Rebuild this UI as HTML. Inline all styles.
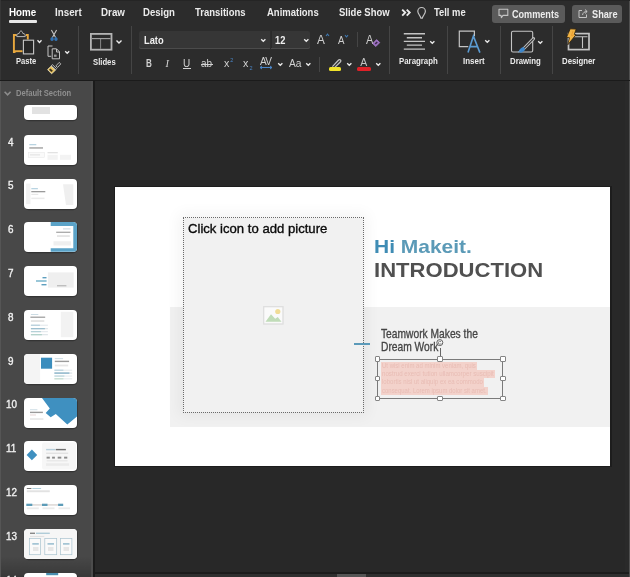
<!DOCTYPE html>
<html><head><meta charset="utf-8"><style>
html,body{margin:0;padding:0;}
body{width:630px;height:577px;overflow:hidden;position:relative;background:#2c2c2c;font-family:"Liberation Sans",sans-serif;}
.r{position:absolute;}
.t{position:absolute;line-height:1;white-space:nowrap;}
#w{position:absolute;left:0;top:0;width:630px;height:577px;will-change:transform;}
.th{background:#fff;border-radius:4px;overflow:hidden;box-shadow:0.3px 0.6px 0 0.6px rgba(0,0,0,.28);}
svg{overflow:visible}
</style></head><body><div id="w">
<div class="r" style="left:0px;top:80px;width:93px;height:497px;background:#484848;"></div>
<div class="r" style="left:0px;top:556px;width:93px;height:21px;background:linear-gradient(rgba(0,0,0,0),rgba(0,0,0,0.22));"></div>
<div class="r" style="left:90.5px;top:80px;width:2.5px;height:497px;background:#4c4c4c;"></div>
<div class="r" style="left:93px;top:80px;width:2px;height:497px;background:#1b1b1b;"></div>
<div class="r" style="left:0px;top:80px;width:1px;height:497px;background:#555555;"></div>
<div class="r" style="left:95px;top:80px;width:535px;height:492px;background:#282828;"></div>
<div class="r" style="left:95px;top:572px;width:535px;height:2px;background:#1c1c1c;"></div>
<div class="r" style="left:95px;top:574px;width:535px;height:3px;background:#2f2f2f;"></div>
<div class="r" style="left:337px;top:574px;width:29px;height:3px;background:#555555;"></div>
<div class="r" style="left:625px;top:81px;width:4px;height:491px;background:#2a2a2a;"></div>
<div class="r" style="left:629px;top:0px;width:1px;height:577px;background:#505050;"></div>
<div class="r" style="left:0px;top:79.6px;width:630px;height:1.4px;background:#1b1b1b;"></div>
<div class="r" style="left:0px;top:0px;width:630px;height:1.2px;background:#252525;"></div>
<div class="r" style="left:0px;top:0px;width:1px;height:79.6px;background:#363636;"></div>
<div class="t" style="left:9px;top:7.07px;font-size:10.780000000000001px;color:#ffffff;font-weight:bold;font-family:'Liberation Sans', sans-serif;transform:scaleX(0.9090909090909091);transform-origin:0 0;">Home</div>
<div class="r" style="left:9px;top:20.4px;width:28px;height:2.2px;background:#e8e8e8;border-radius:1px"></div>
<div class="t" style="left:54.6px;top:7.07px;font-size:10.780000000000001px;color:#ebebeb;font-weight:bold;font-family:'Liberation Sans', sans-serif;transform:scaleX(0.9090909090909091);transform-origin:0 0;">Insert</div>
<div class="t" style="left:101px;top:7.07px;font-size:10.780000000000001px;color:#ebebeb;font-weight:bold;font-family:'Liberation Sans', sans-serif;transform:scaleX(0.9090909090909091);transform-origin:0 0;">Draw</div>
<div class="t" style="left:143px;top:7.26px;font-size:10.56px;color:#ebebeb;font-weight:bold;font-family:'Liberation Sans', sans-serif;transform:scaleX(0.9090909090909091);transform-origin:0 0;">Design</div>
<div class="t" style="left:195.3px;top:7.85px;font-size:10.450000000000001px;color:#ebebeb;font-weight:bold;font-family:'Liberation Sans', sans-serif;transform:scaleX(0.9090909090909091);transform-origin:0 0;">Transitions</div>
<div class="t" style="left:267px;top:7.85px;font-size:10.450000000000001px;color:#ebebeb;font-weight:bold;font-family:'Liberation Sans', sans-serif;transform:scaleX(0.9090909090909091);transform-origin:0 0;">Animations</div>
<div class="t" style="left:338.7px;top:7.85px;font-size:10.450000000000001px;color:#ebebeb;font-weight:bold;font-family:'Liberation Sans', sans-serif;transform:scaleX(0.9090909090909091);transform-origin:0 0;">Slide Show</div>
<svg class="r" style="left:400px;top:8px" width="12" height="9" viewBox="0 0 12 9"><path d="M2.2 1.6 L5.2 4.6 L2.2 7.6 M6.7 1.6 L9.7 4.6 L6.7 7.6" stroke="#ebebeb" stroke-width="1.9" fill="none"/></svg>
<svg class="r" style="left:415px;top:5px" width="13" height="15" viewBox="0 0 13 15"><path d="M2.8 6.3 a3.8 3.8 0 1 1 7.6 0 c0 2.4 -2.4 4.2 -3.1 6.8 h-1.4 c-0.7 -2.6 -3.1 -4.4 -3.1 -6.8 z" stroke="#c4c4c4" stroke-width="1.2" fill="none"/></svg>
<div class="t" style="left:433.8px;top:7.95px;font-size:10.340000000000002px;color:#ebebeb;font-weight:bold;font-family:'Liberation Sans', sans-serif;transform:scaleX(0.9090909090909091);transform-origin:0 0;">Tell me</div>
<div class="r" style="left:492px;top:5px;width:72.5px;height:17.6px;background:#5a5a5a;border-radius:3px"></div>
<svg class="r" style="left:497px;top:8px" width="13" height="12" viewBox="0 0 13 12"><path d="M2 1.2 H10.8 V7.4 H6 L4.4 9.6 L4 7.4 H2 Z" stroke="#c4c4c4" stroke-width="1.1" fill="none" stroke-linejoin="round"/></svg>
<div class="t" style="left:512px;top:10.03px;font-size:10.01px;color:#ececec;font-weight:bold;font-family:'Liberation Sans', sans-serif;transform:scaleX(0.9090909090909091);transform-origin:0 0;">Comments</div>
<div class="r" style="left:572.4px;top:5px;width:50px;height:17.6px;background:#5a5a5a;border-radius:3px"></div>
<svg class="r" style="left:577px;top:8px" width="12" height="11" viewBox="0 0 12 11"><path d="M5 2.5 h-3 v7 h7.5 v-3 M5.5 7 c0.5 -2.5 2 -3.5 4.5 -3.5 M8 1.5 l2.2 2 -2.2 2" stroke="#c4c4c4" stroke-width="1" fill="none"/></svg>
<div class="t" style="left:592px;top:9.93px;font-size:10.12px;color:#ececec;font-weight:bold;font-family:'Liberation Sans', sans-serif;transform:scaleX(0.9090909090909091);transform-origin:0 0;">Share</div>
<div class="r" style="left:78.4px;top:26px;width:1px;height:48px;background:#454545;"></div>
<div class="r" style="left:130.6px;top:26px;width:1px;height:48px;background:#454545;"></div>
<div class="r" style="left:389.3px;top:26px;width:1px;height:48px;background:#454545;"></div>
<div class="r" style="left:447.4px;top:26px;width:1px;height:48px;background:#454545;"></div>
<div class="r" style="left:499.9px;top:26px;width:1px;height:48px;background:#454545;"></div>
<div class="r" style="left:552.4px;top:26px;width:1px;height:48px;background:#454545;"></div>
<div class="r" style="left:318.8px;top:57px;width:1px;height:14.5px;background:#454545;"></div>
<div class="r" style="left:356.5px;top:32px;width:1px;height:15px;background:#454545;"></div>
<svg class="r" style="left:11px;top:29px" width="32" height="27" viewBox="0 0 32 27">
<path d="M4.5 23 H2.9 V6 H5.8 M15 6 H16.8 V10.5" stroke="#e8a83e" stroke-width="1.9" fill="none" transform="translate(0,0)"/>
<path d="M2.9 22.2 H11.5" stroke="#e8a83e" stroke-width="1.9" fill="none"/>
<path d="M5.8 7.6 V5.6 C6.5 4.8 7.4 4.6 8.2 4.4 C8.6 2.6 9.3 2 10 2 C10.7 2 11.4 2.6 11.8 4.4 C12.6 4.6 13.5 4.8 14.2 5.6 V7.6 Z" stroke="#b8b8b8" stroke-width="1" fill="#2c2c2c"/>
<rect x="12.4" y="11.2" width="10.2" height="13.7" fill="#262626" stroke="#c8c8c8" stroke-width="1.1"/>
</svg>
<svg class="r" style="left:36px;top:39px" width="7" height="5" viewBox="0 0 7 5"><path d="M1.5 1.2 L3.5 3.5 L5.5 1.2" stroke="#ebebeb" stroke-width="1.3" fill="none"/></svg>
<div class="t" style="left:15.9px;top:57.32px;font-size:8.36px;color:#ebebeb;font-weight:bold;font-family:'Liberation Sans', sans-serif;transform:scaleX(0.9090909090909091);transform-origin:0 0;">Paste</div>
<svg class="r" style="left:48px;top:29px" width="12" height="14" viewBox="0 0 12 14">
<path d="M3.4 1 L7.6 8.5 M8.6 1 L4.4 8.5" stroke="#c4c4c4" stroke-width="1.1" fill="none"/>
<path d="M4 8 C2.6 8.6 2 9.8 2.6 11.2 C3.3 12.4 5 12 5.6 11 C6 10 5.6 8.6 4.6 8.2 Z" fill="#3270b0"/>
<path d="M8 8 C9.4 8.6 10 9.8 9.4 11.2 C8.7 12.4 7 12 6.4 11 C6 10 6.4 8.6 7.4 8.2 Z" fill="#3270b0"/>
</svg>
<svg class="r" style="left:47px;top:45px" width="14" height="15" viewBox="0 0 14 15">
<path d="M1 11.3 V1 h4.5 M1 11.3 h3.2" stroke="#c4c4c4" stroke-width="1" fill="none"/>
<path d="M5.2 3.8 h4.3 l3 3 v7 h-7.3 z M9.5 4 v3 h3" stroke="#c4c4c4" stroke-width="1" fill="none"/>
<rect x="7" y="9.6" width="2.6" height="2.2" fill="#9a9a9a"/>
</svg>
<svg class="r" style="left:64px;top:50px" width="7" height="5" viewBox="0 0 7 5"><path d="M1.2 1.2 L3.2 3.3 L5.2 1.2" stroke="#ebebeb" stroke-width="1.3" fill="none"/></svg>
<svg class="r" style="left:47px;top:61px" width="15" height="14" viewBox="0 0 15 14">
<path d="M12.2 1.4 L13.8 2.9 L10.6 6.4 L8.9 4.9 Z" stroke="#c4c4c4" stroke-width="0.9" fill="#2c2c2c"/>
<path d="M5.4 3.6 L9.6 7.6 L8.6 8.8 L4.3 4.9 Z" stroke="#c4c4c4" stroke-width="0.9" fill="#2c2c2c"/>
<path d="M4.1 5.2 L8.4 9.2 L4.6 12.8 L0.6 8.6 Z" fill="#e9c25a" stroke="#efe3bf" stroke-width="0.8"/>
<path d="M3.4 7.4 L5.9 9.8 L4.4 11.1 L2 8.7 Z" fill="#3b3320"/>
</svg>
<svg class="r" style="left:89px;top:32px" width="24" height="19" viewBox="0 0 24 19">
<rect x="1.9" y="1.9" width="20.6" height="15.8" fill="none" stroke="#b4b4b4" stroke-width="1.8"/>
<path d="M3 6.6 H21.5" stroke="#a8a8a8" stroke-width="1.1"/>
<path d="M11.6 7 V16.8" stroke="#a0a0a0" stroke-width="0.8"/>
</svg>
<svg class="r" style="left:115px;top:39px" width="8" height="6" viewBox="0 0 8 6"><path d="M1.5 1.5 L4 4 L6.5 1.5" stroke="#ebebeb" stroke-width="1.4" fill="none"/></svg>
<div class="t" style="left:93.3px;top:57.63px;font-size:8.47px;color:#ebebeb;font-weight:bold;font-family:'Liberation Sans', sans-serif;transform:scaleX(0.9090909090909091);transform-origin:0 0;">Slides</div>
<div class="r" style="left:139px;top:30.6px;width:130.6px;height:18.2px;background:#363636;border-radius:2px 0 0 2px;box-shadow:inset 0 -1px 0 #4b4b4b"></div>
<div class="t" style="left:143.5px;top:36.04px;font-size:10.230000000000002px;color:#f0f0f0;font-weight:bold;font-family:'Liberation Sans', sans-serif;transform:scaleX(0.9090909090909091);transform-origin:0 0;">Lato</div>
<svg class="r" style="left:260px;top:38px" width="7" height="5" viewBox="0 0 7 5"><path d="M1.2 1.2 L3.3 3.3 L5.4 1.2" stroke="#ebebeb" stroke-width="1.3" fill="none"/></svg>
<div class="r" style="left:270.6px;top:30.6px;width:39.4px;height:18.2px;background:#363636;border-radius:0 2px 2px 0;box-shadow:inset 0 -1px 0 #4b4b4b,inset 1px 0 0 #2a2a2a"></div>
<div class="t" style="left:275.2px;top:36.04px;font-size:10.230000000000002px;color:#f0f0f0;font-weight:bold;font-family:'Liberation Sans', sans-serif;transform:scaleX(0.9090909090909091);transform-origin:0 0;">12</div>
<svg class="r" style="left:303px;top:38px" width="7" height="5" viewBox="0 0 7 5"><path d="M1.2 1.2 L3.3 3.3 L5.4 1.2" stroke="#ebebeb" stroke-width="1.3" fill="none"/></svg>
<div class="t" style="left:316.8px;top:32.86px;font-size:13.4px;color:#cfcfcf;font-weight:normal;font-family:'Liberation Sans', sans-serif;transform:scaleX(0.88);transform-origin:0 0;">A</div>
<svg class="r" style="left:325px;top:32.5px" width="5" height="4" viewBox="0 0 5 4"><path d="M1 3 L2.5 1.2 L4 3" stroke="#3f78b0" stroke-width="1.1" fill="none"/></svg>
<div class="t" style="left:337.6px;top:34.89px;font-size:11.0px;color:#cfcfcf;font-weight:normal;font-family:'Liberation Sans', sans-serif;transform:scaleX(0.88);transform-origin:0 0;">A</div>
<svg class="r" style="left:344px;top:34px" width="5" height="4" viewBox="0 0 5 4"><path d="M1 1.2 L2.5 3 L4 1.2" stroke="#3f78b0" stroke-width="1.1" fill="none"/></svg>
<div class="t" style="left:366.2px;top:33.62px;font-size:12.5px;color:#cfcfcf;font-weight:normal;font-family:'Liberation Sans', sans-serif;transform:scaleX(0.88);transform-origin:0 0;">A</div>
<svg class="r" style="left:370.5px;top:38px" width="10" height="10" viewBox="0 0 10 10"><path d="M1.6 5.6 L5.6 1.6 L8.8 4.6 L4.8 8.6 Z" fill="#9c6fc2" stroke="#b48ad6" stroke-width="0.6"/><path d="M3.6 5.4 L5.6 3.4 L6.8 4.6 L4.8 6.6 Z" fill="#3c2c4a"/></svg>
<div class="t" style="left:145.6px;top:58.50px;font-size:10.4px;color:#d2d2d2;font-weight:bold;font-family:'Liberation Sans', sans-serif;transform:scaleX(0.78);transform-origin:0 0;">B</div>
<div class="t" style="left:165.6px;top:58.50px;font-size:10.4px;color:#d2d2d2;font-weight:normal;font-family:'Liberation Serif', serif;font-style:italic">I</div>
<div class="t" style="left:183.2px;top:58.67px;font-size:10.2px;color:#d2d2d2;font-weight:normal;font-family:'Liberation Sans', sans-serif;transform:scaleX(0.98);transform-origin:0 0;">U</div>
<div class="r" style="left:183.2px;top:68.4px;width:7.4px;height:0.9px;background:#d2d2d2;"></div>
<div class="t" style="left:201px;top:58.41px;font-size:10.5px;color:#d2d2d2;font-weight:normal;font-family:'Liberation Sans', sans-serif;transform:scaleX(0.95);transform-origin:0 0;">ab</div>
<div class="r" style="left:200.5px;top:63.6px;width:12.5px;height:0.9px;background:#d2d2d2;"></div>
<div class="t" style="left:224px;top:58.97px;font-size:10.2px;color:#d2d2d2;font-weight:normal;font-family:'Liberation Sans', sans-serif;transform:scaleX(1.05);transform-origin:0 0;">x</div>
<div class="t" style="left:230.2px;top:57.54px;font-size:5.5px;color:#4a86c8;font-weight:normal;font-family:'Liberation Sans', sans-serif;">2</div>
<div class="t" style="left:243px;top:58.97px;font-size:10.2px;color:#d2d2d2;font-weight:normal;font-family:'Liberation Sans', sans-serif;transform:scaleX(1.05);transform-origin:0 0;">x</div>
<div class="t" style="left:249.4px;top:66.14px;font-size:5.5px;color:#4a86c8;font-weight:normal;font-family:'Liberation Sans', sans-serif;">2</div>
<div class="t" style="left:259.8px;top:57.18px;font-size:10.3px;color:#d2d2d2;font-weight:normal;font-family:'Liberation Sans', sans-serif;transform:scaleX(0.98);transform-origin:0 0;letter-spacing:-0.7px;">AV</div>
<svg class="r" style="left:259px;top:65px" width="14" height="5" viewBox="0 0 14 5"><path d="M1 2.5 H13 M1 2.5 L3 1 M1 2.5 L3 4 M13 2.5 L11 1 M13 2.5 L11 4" stroke="#4a86c8" stroke-width="1" fill="none"/></svg>
<svg class="r" style="left:276.5px;top:61.5px" width="7" height="5" viewBox="0 0 7 5"><path d="M1.2 1.2 L3.3 3.3 L5.4 1.2" stroke="#ebebeb" stroke-width="1.3" fill="none"/></svg>
<div class="t" style="left:289px;top:59.10px;font-size:10.4px;color:#d2d2d2;font-weight:normal;font-family:'Liberation Sans', sans-serif;transform:scaleX(0.98);transform-origin:0 0;">Aa</div>
<svg class="r" style="left:305px;top:62px" width="7" height="5" viewBox="0 0 7 5"><path d="M1.2 1.2 L3.3 3.3 L5.4 1.2" stroke="#ebebeb" stroke-width="1.3" fill="none"/></svg>
<svg class="r" style="left:328px;top:57px" width="14" height="14" viewBox="0 0 14 14"><path d="M4.4 9.6 L10.6 3 a1.3 1.3 0 0 1 1.9 1.8 L6.6 10.6" fill="none" stroke="#c4c4c4" stroke-width="1.2"/></svg>
<div class="r" style="left:329.2px;top:67.2px;width:11.9px;height:3.5px;background:#f0e22a;border-radius:1.5px"></div>
<svg class="r" style="left:345.5px;top:62px" width="7" height="5" viewBox="0 0 7 5"><path d="M1.2 1.2 L3.3 3.3 L5.4 1.2" stroke="#ebebeb" stroke-width="1.3" fill="none"/></svg>
<div class="t" style="left:360.2px;top:57.01px;font-size:10.5px;color:#c4c4c4;font-weight:normal;font-family:'Liberation Sans', sans-serif;">A</div>
<div class="r" style="left:357.3px;top:67.2px;width:13.4px;height:3.7px;background:#df2128;border-radius:1.5px"></div>
<svg class="r" style="left:374.5px;top:62px" width="7" height="5" viewBox="0 0 7 5"><path d="M1.2 1.2 L3.3 3.3 L5.4 1.2" stroke="#ebebeb" stroke-width="1.3" fill="none"/></svg>
<svg class="r" style="left:402px;top:32px" width="25" height="18" viewBox="0 0 25 18">
<path d="M1.8 1.8 H23 M4.8 5.7 H20 M1.8 9.4 H23 M4.8 13.1 H20 M1.8 17.1 H23" stroke="#c4c4c4" stroke-width="1.4"/>
</svg>
<svg class="r" style="left:428.9px;top:39.5px" width="7" height="5" viewBox="0 0 7 5"><path d="M1.2 1.2 L3.3 3.3 L5.4 1.2" stroke="#ebebeb" stroke-width="1.3" fill="none"/></svg>
<div class="t" style="left:399.3px;top:57.09px;font-size:8.635px;color:#ebebeb;font-weight:bold;font-family:'Liberation Sans', sans-serif;transform:scaleX(0.9090909090909091);transform-origin:0 0;">Paragraph</div>
<svg class="r" style="left:458px;top:30px" width="24" height="24" viewBox="0 0 24 24">
<path d="M10.3 16.6 H1.3 V1.1 H16.4 V6.2" stroke="#c4c4c4" stroke-width="1.2" fill="none"/>
<path d="M10 22.6 L15.4 6.2 L21.9 22.6 M12.3 16.6 H19.6" stroke="#5b9bd2" stroke-width="1.6" fill="none"/>
</svg>
<svg class="r" style="left:483.6px;top:39.2px" width="7" height="5" viewBox="0 0 7 5"><path d="M1.2 1.2 L3.3 3.3 L5.4 1.2" stroke="#ebebeb" stroke-width="1.3" fill="none"/></svg>
<div class="t" style="left:462.7px;top:56.50px;font-size:8.745000000000001px;color:#ebebeb;font-weight:bold;font-family:'Liberation Sans', sans-serif;transform:scaleX(0.9090909090909091);transform-origin:0 0;">Insert</div>
<svg class="r" style="left:505px;top:26px" width="40" height="30" viewBox="0 0 40 30">
<rect x="6.5" y="5.3" width="21.2" height="20.7" rx="1.5" fill="none" stroke="#c4c4c4" stroke-width="1.1"/>
<path d="M28.6 12.6 L18.6 22.8" stroke="#c4c4c4" stroke-width="3" stroke-linecap="round" fill="none"/>
<path d="M28.6 12.6 L18.6 22.8" stroke="#2c2c2c" stroke-width="1.1" fill="none"/>
<ellipse cx="17" cy="24" rx="3.2" ry="2.1" transform="rotate(-40 17 24)" fill="#3b86cc"/>
<path d="M13.2 26.2 C14 25.6 14.5 25.2 15 24.6" stroke="#7fb8e6" stroke-width="0.9" fill="none"/>
</svg>
<svg class="r" style="left:537px;top:40px" width="7" height="5" viewBox="0 0 7 5"><path d="M1.2 1.2 L3.3 3.3 L5.4 1.2" stroke="#ebebeb" stroke-width="1.3" fill="none"/></svg>
<div class="t" style="left:510.4px;top:57.14px;font-size:8.58px;color:#ebebeb;font-weight:bold;font-family:'Liberation Sans', sans-serif;transform:scaleX(0.9090909090909091);transform-origin:0 0;">Drawing</div>
<svg class="r" style="left:560px;top:26px" width="40" height="30" viewBox="0 0 40 30">
<rect x="8.5" y="7.6" width="20.5" height="16" fill="none" stroke="#c4c4c4" stroke-width="1.7"/>
<path d="M10 10.8 H27.5 M22.5 11 V22" stroke="#c4c4c4" stroke-width="1.1"/>
<path d="M10.2 2.8 L16.2 3.1 L14.3 8.4 L16 8.7 L7.8 18.8 L9.4 11.7 L6.5 11.4 Z" fill="#f2b445" stroke="#2a2010" stroke-width="0.8" stroke-linejoin="round"/><path d="M13 5 L11.5 9.5 L13.5 9.8" stroke="#e8962a" stroke-width="0.8" fill="none"/>
</svg>
<div class="t" style="left:561.9px;top:57.14px;font-size:8.58px;color:#ebebeb;font-weight:bold;font-family:'Liberation Sans', sans-serif;transform:scaleX(0.9090909090909091);transform-origin:0 0;">Designer</div>
<svg class="r" style="left:3px;top:89.5px" width="9" height="7" viewBox="0 0 9 7"><path d="M1.6 1.8 L4.6 4.8 L7.6 1.8" stroke="#8c8c8c" stroke-width="1.6" fill="none"/></svg>
<div class="t" style="left:15.9px;top:88.72px;font-size:8.36px;color:#8f8f8f;font-weight:bold;font-family:'Liberation Sans', sans-serif;transform:scaleX(0.9090909090909091);transform-origin:0 0;">Default Section</div>
<div class="r th" style="left:23.8px;top:104.6px;width:53.5px;height:15.8px"><div class="r" style="left:8px;top:2.5px;width:18px;height:7px;background:#e2e2e2"></div></div>
<div class="t" style="left:7.6px;top:137.67px;font-size:10.2px;color:#f0f0f0;font-weight:normal;font-family:'Liberation Sans', sans-serif;transform:scaleX(0.97);transform-origin:0 0;-webkit-text-stroke:0.35px #f0f0f0">4</div>
<div class="t" style="left:7.6px;top:181.47px;font-size:10.2px;color:#f0f0f0;font-weight:normal;font-family:'Liberation Sans', sans-serif;transform:scaleX(0.97);transform-origin:0 0;-webkit-text-stroke:0.35px #f0f0f0">5</div>
<div class="t" style="left:7.6px;top:225.27px;font-size:10.2px;color:#f0f0f0;font-weight:normal;font-family:'Liberation Sans', sans-serif;transform:scaleX(0.97);transform-origin:0 0;-webkit-text-stroke:0.35px #f0f0f0">6</div>
<div class="t" style="left:7.6px;top:269.07px;font-size:10.2px;color:#f0f0f0;font-weight:normal;font-family:'Liberation Sans', sans-serif;transform:scaleX(0.97);transform-origin:0 0;-webkit-text-stroke:0.35px #f0f0f0">7</div>
<div class="t" style="left:7.6px;top:312.87px;font-size:10.2px;color:#f0f0f0;font-weight:normal;font-family:'Liberation Sans', sans-serif;transform:scaleX(0.97);transform-origin:0 0;-webkit-text-stroke:0.35px #f0f0f0">8</div>
<div class="t" style="left:7.6px;top:356.67px;font-size:10.2px;color:#f0f0f0;font-weight:normal;font-family:'Liberation Sans', sans-serif;transform:scaleX(0.97);transform-origin:0 0;-webkit-text-stroke:0.35px #f0f0f0">9</div>
<div class="t" style="left:5.6px;top:400.47px;font-size:10.2px;color:#f0f0f0;font-weight:normal;font-family:'Liberation Sans', sans-serif;transform:scaleX(0.97);transform-origin:0 0;-webkit-text-stroke:0.35px #f0f0f0">10</div>
<div class="t" style="left:5.6px;top:444.27px;font-size:10.2px;color:#f0f0f0;font-weight:normal;font-family:'Liberation Sans', sans-serif;transform:scaleX(0.97);transform-origin:0 0;-webkit-text-stroke:0.35px #f0f0f0">11</div>
<div class="t" style="left:5.6px;top:488.07px;font-size:10.2px;color:#f0f0f0;font-weight:normal;font-family:'Liberation Sans', sans-serif;transform:scaleX(0.97);transform-origin:0 0;-webkit-text-stroke:0.35px #f0f0f0">12</div>
<div class="t" style="left:5.6px;top:531.87px;font-size:10.2px;color:#f0f0f0;font-weight:normal;font-family:'Liberation Sans', sans-serif;transform:scaleX(0.97);transform-origin:0 0;-webkit-text-stroke:0.35px #f0f0f0">13</div>
<div class="t" style="left:5.6px;top:575.67px;font-size:10.2px;color:#f0f0f0;font-weight:normal;font-family:'Liberation Sans', sans-serif;transform:scaleX(0.97);transform-origin:0 0;-webkit-text-stroke:0.35px #f0f0f0">14</div>
<div class="r th" style="left:23.8px;top:134.7px;width:53.2px;height:30.2px"><svg width="53.2" height="29.8" viewBox="0 0 53.2 29.8" style="position:absolute;left:0;top:0"><rect x="5.3" y="9.3" width="7" height="0.9" fill="#9cc2d6"/><rect x="5.3" y="12.3" width="13.7" height="1.3" fill="#9a9a9a"/><rect x="4.3" y="17.4" width="16.2" height="5.2" fill="#fafafa" stroke="#e6e6e6" stroke-width="0.5"/><rect x="6" y="19.5" width="10" height="0.8" fill="#dadada"/><rect x="23.5" y="17.4" width="10.3" height="0.8" fill="#cfcfcf"/><rect x="23.5" y="19.8" width="10.3" height="5" fill="#ebebeb" opacity=".6"/><rect x="36" y="19.8" width="11" height="5" fill="#ebebeb" opacity=".6"/></svg></div>
<div class="r th" style="left:23.8px;top:178.5px;width:53.2px;height:30.2px"><svg width="53.2" height="29.8" viewBox="0 0 53.2 29.8" style="position:absolute;left:0;top:0"><rect x="2.1" y="4.6" width="4.4" height="20.6" fill="#f1f1f1"/><rect x="7.3" y="9.3" width="6.6" height="0.9" fill="#9cc2d6"/><rect x="7.3" y="12" width="14" height="1.3" fill="#9a9a9a"/><rect x="7.3" y="14.9" width="7" height="0.7" fill="#d8d8d8"/><rect x="7.3" y="18.6" width="13.2" height="1.5" fill="#ebebeb"/><path d="M39 5.3 H49.3 V26 H42 Z" fill="#efefef"/></svg></div>
<div class="r th" style="left:23.8px;top:222.3px;width:53.2px;height:30.2px"><svg width="53.2" height="29.8" viewBox="0 0 53.2 29.8" style="position:absolute;left:0;top:0"><path d="M26.7 0 H53.2 V29.8 H26.7 V26.2 H49.3 V4.1 H26.7 Z" fill="#5ba3c8"/><rect x="39" y="6.4" width="7.5" height="1" fill="#c8d8e0"/><rect x="32.2" y="9.7" width="14.3" height="1.1" fill="#9a9a9a"/><rect x="33" y="13.4" width="12.8" height="1.3" fill="#dadada"/><rect x="29.5" y="19.3" width="17.5" height="4.2" fill="#ebebeb" opacity=".8"/></svg></div>
<div class="r th" style="left:23.8px;top:266.1px;width:53.2px;height:30.2px"><svg width="53.2" height="29.8" viewBox="0 0 53.2 29.8" style="position:absolute;left:0;top:0"><rect x="23.9" y="6.4" width="25.8" height="15.2" fill="#efefef"/><rect x="18.5" y="11" width="4" height="1.4" fill="#5e9fbf"/><rect x="12" y="14.3" width="10.6" height="1.4" fill="#6fb0c8"/><rect x="17.5" y="18" width="5" height="1.4" fill="#5e9fbf"/><rect x="33" y="19.3" width="9.4" height="1" fill="#aaaaaa"/></svg></div>
<div class="r th" style="left:23.8px;top:309.9px;width:53.2px;height:30.2px"><svg width="53.2" height="29.8" viewBox="0 0 53.2 29.8" style="position:absolute;left:0;top:0"><rect x="36.8" y="1.8" width="12.5" height="25.4" fill="#f2f2f2"/><rect x="6.9" y="4.1" width="7.4" height="0.8" fill="#c0d4de"/><rect x="6.4" y="6.6" width="14.8" height="1.2" fill="#9a9a9a"/><rect x="6.9" y="10.1" width="13.4" height="1.9" fill="#e4e4e4"/><rect x="6.9" y="14.7" width="17" height="1" fill="#e0e6ea"/><rect x="6.9" y="14.7" width="9" height="1" fill="#a9c8d6"/><rect x="6.9" y="18" width="17" height="1.3" fill="#e0e6ea"/><rect x="6.9" y="18" width="14" height="1.3" fill="#9dbfcf"/><rect x="6.9" y="21.2" width="17" height="1" fill="#e0e6ea"/><rect x="6.9" y="21.2" width="10" height="1" fill="#a9ccd2"/><rect x="6.9" y="24" width="17" height="1.3" fill="#e0e6ea"/><rect x="6.9" y="24" width="11" height="1.3" fill="#b5d4cc"/></svg></div>
<div class="r th" style="left:23.8px;top:353.7px;width:53.2px;height:30.2px"><svg width="53.2" height="29.8" viewBox="0 0 53.2 29.8" style="position:absolute;left:0;top:0"><rect x="0" y="0" width="16.1" height="29.8" fill="#f4f4f4"/><rect x="17" y="3.7" width="11.1" height="11" fill="#3a8dbd"/><rect x="30.8" y="4.3" width="8.3" height="0.8" fill="#c0d4de"/><rect x="30.8" y="6.7" width="14.3" height="1.4" fill="#9a9a9a"/><rect x="30.8" y="10.6" width="13.4" height="1.8" fill="#e6e6e6"/><rect x="30.4" y="15.7" width="17.8" height="0.9" fill="#e0e6ea"/><rect x="30.4" y="15.7" width="9" height="0.9" fill="#a9c8d6"/><rect x="30.4" y="18.4" width="17.8" height="1.4" fill="#e0e6ea"/><rect x="30.4" y="18.4" width="15" height="1.4" fill="#8cb6cb"/><rect x="30.4" y="21.6" width="17.8" height="0.9" fill="#e0e6ea"/><rect x="30.4" y="21.6" width="10" height="0.9" fill="#a9ccd2"/><rect x="30.4" y="24.4" width="17.8" height="0.9" fill="#e0e6ea"/><rect x="30.4" y="24.4" width="9" height="0.9" fill="#b5d8c4"/></svg></div>
<div class="r th" style="left:23.8px;top:397.5px;width:53.2px;height:30.2px"><svg width="53.2" height="29.8" viewBox="0 0 53.2 29.8" style="position:absolute;left:0;top:0"><path d="M18 0 H53.2 V18.3 L43.3 26.6 L31.8 16 L26.7 19.2 L21.7 15.1 L25.8 10.5 L18 0 Z" fill="#3f90c0"/><rect x="6" y="11.4" width="7.4" height="0.8" fill="#c0d4de"/><rect x="6" y="13.7" width="12.9" height="1.4" fill="#9a9a9a"/><rect x="6" y="16.6" width="6" height="0.8" fill="#e2cccc"/><rect x="6" y="20.1" width="13.4" height="1.9" fill="#ebebeb"/></svg></div>
<div class="r th" style="left:23.8px;top:441.3px;width:53.2px;height:30.2px"><svg width="53.2" height="29.8" viewBox="0 0 53.2 29.8" style="position:absolute;left:0;top:0"><rect x="18" y="1.5" width="34" height="27" rx="2" fill="#f7f7f7"/><path d="M7.9 8.6 L13.2 13.9 L7.9 19.2 L2.6 13.9 Z" fill="#3f90c0"/><rect x="22.1" y="7.9" width="9.2" height="1.4" fill="#b8d0dc"/><rect x="31.8" y="7.9" width="10.1" height="1.4" fill="#707070"/><rect x="22.1" y="11.6" width="22.1" height="1.4" fill="#e2e2e2"/><rect x="22.6" y="15.7" width="3.2" height="1.9" fill="#8c8c8c"/><rect x="28.1" y="15.7" width="2.8" height="1.9" fill="#8c8c8c"/><rect x="33.7" y="15.7" width="3.6" height="1.9" fill="#8c8c8c"/><rect x="40.1" y="15.7" width="3.2" height="1.9" fill="#8c8c8c"/><rect x="22.6" y="19.4" width="21" height="0.9" fill="#e0e0e0"/><rect x="22.1" y="22.2" width="23" height="2.7" fill="#ebebeb"/></svg></div>
<div class="r th" style="left:23.8px;top:485.1px;width:53.2px;height:30.2px"><svg width="53.2" height="29.8" viewBox="0 0 53.2 29.8" style="position:absolute;left:0;top:0"><rect x="2.8" y="3" width="4.6" height="1" fill="#777"/><rect x="8.3" y="3" width="8.8" height="1" fill="#b0d0dc"/><rect x="2.8" y="5.3" width="23" height="1.9" fill="#e2e2e2"/><rect x="8" y="19.4" width="26" height="1.1" fill="#cfc9c6"/><rect x="2.3" y="18.7" width="6" height="2.3" fill="#5d9cb8"/><rect x="18" y="18.7" width="5.5" height="2.3" fill="#5d9cb8"/><rect x="34.1" y="18.7" width="5.1" height="2.3" fill="#5d9cb8"/><rect x="2.8" y="22.4" width="12" height="1.8" fill="#ebebeb"/><rect x="18.5" y="22.4" width="12" height="1.8" fill="#ebebeb"/><rect x="34.5" y="22.4" width="11.5" height="1.8" fill="#ebebeb"/></svg></div>
<div class="r th" style="left:23.8px;top:528.9px;width:53.2px;height:30.2px"><svg width="53.2" height="29.8" viewBox="0 0 53.2 29.8" style="position:absolute;left:0;top:0"><rect x="0" y="0" width="53.2" height="29.8" fill="#f6f6f6"/><rect x="6" y="3.6" width="5" height="1.4" fill="#888"/><rect x="12" y="3.6" width="13.8" height="1.4" fill="#b0ccd8"/><rect x="6" y="6.9" width="14.3" height="0.9" fill="#dcdcdc"/><rect x="5.6" y="9.6" width="11" height="16.1" fill="#fafafa" stroke="#a9c3cf" stroke-width="0.7"/><rect x="20.8" y="9.6" width="11.9" height="16.1" fill="#fafafa" stroke="#a9c3cf" stroke-width="0.7"/><rect x="36.4" y="9.6" width="11.5" height="16.1" fill="#fafafa" stroke="#a9c3cf" stroke-width="0.7"/><rect x="8.3" y="14.2" width="6.5" height="1.4" fill="#8fb8cc"/><rect x="23.5" y="14.2" width="6.5" height="1.4" fill="#8fb8cc"/><rect x="39" y="14.2" width="6.5" height="1.4" fill="#8fb8cc"/><rect x="9" y="18" width="5.5" height="4" fill="#e6e6e6"/><rect x="24" y="18" width="5.5" height="4" fill="#e6e6e6"/><rect x="39.5" y="18" width="5.5" height="4" fill="#e6e6e6"/></svg></div>
<div class="r th" style="left:23.8px;top:572.7px;width:53.2px;height:30.2px"><svg width="53.2" height="29.8" viewBox="0 0 53.2 29.8" style="position:absolute;left:0;top:0"><rect x="22.2" y="0" width="12" height="2.2" fill="#4a8fb0"/></svg></div>
<div class="r" style="left:114px;top:185.7px;width:497.5px;height:281.7px;background:#151515;opacity:.6"></div>
<div class="r" style="left:114.9px;top:186.7px;width:495.6px;height:279.7px;background:#ffffff;"></div>
<div class="r" style="left:170.3px;top:306.9px;width:440.2px;height:119.8px;background:#f1f1f1;"></div>
<div class="r" style="left:183px;top:217.5px;width:180.3px;height:194.5px;background:#f1f1f1;box-shadow:0 0 14px 4px rgba(0,0,0,0.05);"></div>
<div class="r" style="left:182.7px;top:217.2px;width:179.6px;height:194.2px;border:1px dotted #6a6a6a;box-sizing:content-box"></div>
<div class="t" style="left:187.6px;top:222.33px;font-size:13.2px;color:#0a0a0a;font-weight:normal;font-family:'Liberation Sans', sans-serif;transform:scaleX(0.995);transform-origin:0 0;-webkit-text-stroke:0.35px #0a0a0a">Click icon to add picture</div>
<svg class="r" style="left:263px;top:306px" width="21" height="19" viewBox="0 0 21 19">
<rect x="0.7" y="0.7" width="19.3" height="17.3" fill="#fafafa" stroke="#dedede" stroke-width="1.3"/>
<path d="M2.5 15.8 L8 8.2 L12.2 12.8 L14.8 11 L18.5 15.8 Z" fill="#c0dcb8"/>
<circle cx="14.8" cy="5.5" r="2.6" fill="#f0dc96"/>
</svg>
<div class="t" style="left:373.9px;top:237.66px;font-size:18.6px;color:#3b8cb5;font-weight:bold;font-family:'Liberation Sans', sans-serif;transform:scaleX(1.128);transform-origin:0 0;"><span style="color:#3f8cb4">Hi</span> <span style="color:#5b9ab7">Makeit.</span></div>
<div class="t" style="left:373.9px;top:260.11px;font-size:20.9px;color:#505050;font-weight:bold;font-family:'Liberation Sans', sans-serif;transform:scaleX(1.056);transform-origin:0 0;">INTRODUCTION</div>
<div class="t" style="left:381.4px;top:329.43px;font-size:11.9px;color:#444444;font-weight:normal;font-family:'Liberation Sans', sans-serif;transform:scaleX(0.862);transform-origin:0 0;-webkit-text-stroke:0.3px #444">Teamwork Makes the</div>
<div class="t" style="left:381.4px;top:342.03px;font-size:11.9px;color:#444444;font-weight:normal;font-family:'Liberation Sans', sans-serif;transform:scaleX(0.862);transform-origin:0 0;-webkit-text-stroke:0.3px #444">Dream Work</div>
<div class="r" style="left:354.4px;top:343.2px;width:15.6px;height:1.8px;background:#5b9ab9;"></div>
<div class="r" style="left:381.2px;top:362px;width:95.69999999999999px;height:8.199999999999989px;background:#f3d2cb;"></div>
<div class="r" style="left:381.2px;top:370.2px;width:113.60000000000002px;height:8.199999999999989px;background:#f3d2cb;"></div>
<div class="r" style="left:381.2px;top:378.4px;width:102.80000000000001px;height:8.200000000000045px;background:#f3d2cb;"></div>
<div class="r" style="left:381.2px;top:386.6px;width:106.40000000000003px;height:8.199999999999989px;background:#f3d2cb;"></div>
<div class="t" style="left:382px;top:362.97px;font-size:6.3px;color:#e8bcb4;font-weight:normal;font-family:'Liberation Sans', sans-serif;transform:scaleX(0.9545156519219917);transform-origin:0 0;">Ut wisi enim ad minim veniam, quis</div>
<div class="t" style="left:382px;top:371.17px;font-size:6.3px;color:#e8bcb4;font-weight:normal;font-family:'Liberation Sans', sans-serif;transform:scaleX(0.979471374020984);transform-origin:0 0;">nostrud exerci tution ullamcorper suscipit</div>
<div class="t" style="left:382px;top:379.37px;font-size:6.3px;color:#e8bcb4;font-weight:normal;font-family:'Liberation Sans', sans-serif;transform:scaleX(0.961469096220537);transform-origin:0 0;">lobortis nisl ut aliquip ex ea commodo</div>
<div class="t" style="left:382px;top:387.57px;font-size:6.3px;color:#e8bcb4;font-weight:normal;font-family:'Liberation Sans', sans-serif;transform:scaleX(0.9483717922291711);transform-origin:0 0;">consequat. Lorem ipsum dolor sit amet.</div>
<div class="r" style="left:377.4px;top:358.8px;width:125.7px;height:39.8px;border:1px solid #7a7a7a;box-sizing:border-box"></div>
<div class="r" style="left:440px;top:347.5px;width:1px;height:11px;background:#666666;"></div>
<svg class="r" style="left:435.3px;top:338.2px" width="10" height="10" viewBox="0 0 10 10"><circle cx="4.8" cy="4.6" r="3.0" fill="#f8f8f8" stroke="#505050" stroke-width="0.9"/><path d="M6 3.9 A1.5 1.5 0 1 0 6.2 5.2" stroke="#555" stroke-width="0.7" fill="none"/></svg>
<div class="r" style="left:374.6px;top:356.0px;width:5.6px;height:5.6px;background:#fff;border:1px solid #858585;box-sizing:border-box;border-radius:1px"></div>
<div class="r" style="left:374.6px;top:375.9px;width:5.6px;height:5.6px;background:#fff;border:1px solid #858585;box-sizing:border-box;border-radius:1px"></div>
<div class="r" style="left:374.6px;top:395.8px;width:5.6px;height:5.6px;background:#fff;border:1px solid #858585;box-sizing:border-box;border-radius:1px"></div>
<div class="r" style="left:437.4px;top:356.0px;width:5.6px;height:5.6px;background:#fff;border:1px solid #858585;box-sizing:border-box;border-radius:1px"></div>
<div class="r" style="left:437.4px;top:395.8px;width:5.6px;height:5.6px;background:#fff;border:1px solid #858585;box-sizing:border-box;border-radius:1px"></div>
<div class="r" style="left:500.3px;top:356.0px;width:5.6px;height:5.6px;background:#fff;border:1px solid #858585;box-sizing:border-box;border-radius:1px"></div>
<div class="r" style="left:500.3px;top:375.9px;width:5.6px;height:5.6px;background:#fff;border:1px solid #858585;box-sizing:border-box;border-radius:1px"></div>
<div class="r" style="left:500.3px;top:395.8px;width:5.6px;height:5.6px;background:#fff;border:1px solid #858585;box-sizing:border-box;border-radius:1px"></div>
</div></body></html>
